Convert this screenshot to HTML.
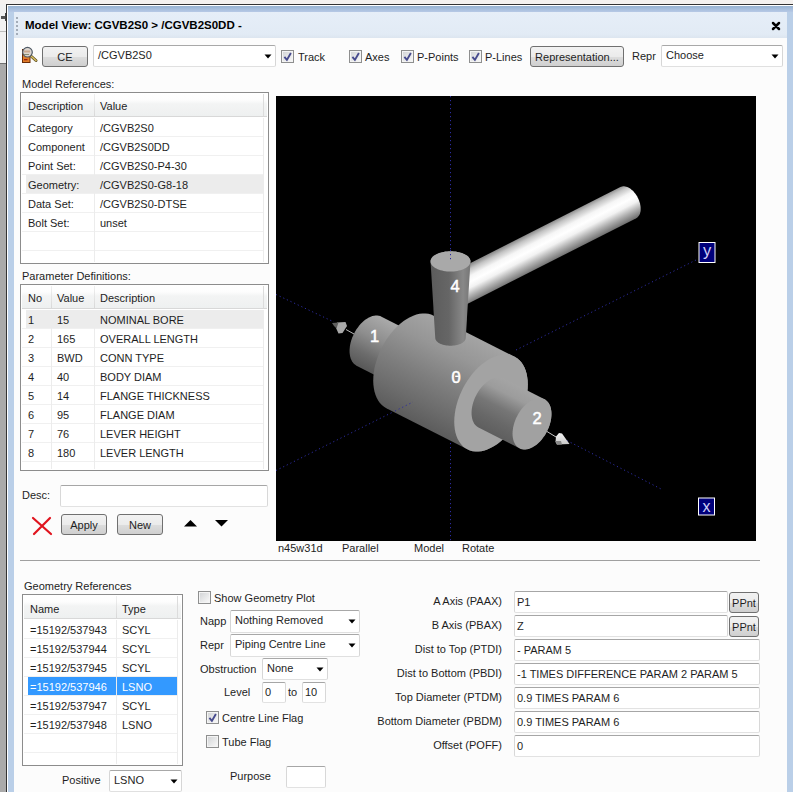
<!DOCTYPE html>
<html><head><meta charset="utf-8"><style>
html,body{margin:0;padding:0}
body{width:793px;height:792px;position:relative;overflow:hidden;background:#f1f1f1;font-family:"Liberation Sans",sans-serif}
.t{position:absolute;font-family:"Liberation Sans",sans-serif;font-size:11px;line-height:13px;white-space:nowrap;color:#1e1e1e}
</style></head><body>
<div style="position:absolute;left:0px;top:0px;width:793px;height:4px;background:#f4f1ef"></div>
<div style="position:absolute;left:0px;top:4px;width:6px;height:60px;background:#f1f1f1"></div>
<div style="position:absolute;left:0px;top:31px;width:6px;height:1px;background:#bdbdbd"></div>
<div style="position:absolute;left:1px;top:16px;width:5px;height:3px;background:#555"></div>
<div style="position:absolute;left:5px;top:13px;width:1px;height:8px;background:#444"></div>
<div style="position:absolute;left:0px;top:63px;width:6px;height:1px;background:#707070"></div>
<div style="position:absolute;left:0px;top:64px;width:6px;height:728px;background:#aaaaaa"></div>
<div style="position:absolute;left:6px;top:4px;width:787px;height:788px;background:#333"></div>
<div style="position:absolute;left:7px;top:5px;width:786px;height:787px;background:#fff"></div>
<div style="position:absolute;left:8px;top:6px;width:785px;height:786px;background:#bacfe8"></div>
<div style="position:absolute;left:8px;top:6px;width:785px;height:6px;background:linear-gradient(#97b3d2,#b7c9e6)"></div>
<div style="position:absolute;left:14px;top:12px;width:773px;height:26px;background:linear-gradient(#e6eef8,#e2ebf5 85%,#dce5ef)"></div>
<div style="position:absolute;left:14px;top:38px;width:773px;height:754px;background:#fcfcfc"></div>
<div style="position:absolute;left:16px;top:17px;width:2px;height:2px;background:#a3acb8"></div>
<div style="position:absolute;left:16px;top:21px;width:2px;height:2px;background:#a3acb8"></div>
<div style="position:absolute;left:16px;top:25px;width:2px;height:2px;background:#a3acb8"></div>
<div style="position:absolute;left:16px;top:29px;width:2px;height:2px;background:#a3acb8"></div>
<div style="position:absolute;left:16px;top:33px;width:2px;height:2px;background:#a3acb8"></div>
<div class="t" style="left:25px;top:19px;font-size:11.5px;color:#000;font-weight:bold;">Model View: CGVB2S0 &gt; /CGVB2S0DD -</div>
<svg width="12" height="12" style="position:absolute;left:770px;top:20px"><path d="M3 3L9 9M9 3L3 9" stroke="#000" stroke-width="2.5" stroke-linecap="round"/></svg>
<svg width="24" height="22" viewBox="0 0 24 22" style="position:absolute;left:18px;top:44px">
<rect x="4.5" y="5.5" width="7.5" height="13" fill="#e07e2a" stroke="#6a2c08" stroke-width="1"/>
<rect x="6" y="15" width="3.5" height="1.3" fill="#9a1a10"/>
<line x1="13.5" y1="12.5" x2="18" y2="16.5" stroke="#5a4a20" stroke-width="3" stroke-linecap="round"/>
<line x1="13.5" y1="12.5" x2="18" y2="16.5" stroke="#d8c060" stroke-width="1.6" stroke-linecap="round"/>
<circle cx="9.5" cy="8.2" r="4.8" fill="#dcd6d0" stroke="#505a66" stroke-width="1.2"/>
<rect x="6" y="6.5" width="6" height="2" fill="#c9a890"/>
<rect x="6" y="10" width="5" height="1" fill="#8a8a70"/>
</svg>
<div style="position:absolute;left:42px;top:46px;width:46px;height:21px;border:1px solid #707070;box-sizing:border-box;border-radius:3px;background:linear-gradient(#f2f2f2 0%,#ebebeb 50%,#dddddd 51%,#cfcfcf 100%)"></div>
<div class="t" style="left:42px;width:46px;text-align:center;top:51px;font-size:11px;color:#1e1e1e">CE</div>
<div style="position:absolute;left:93px;top:45px;width:183px;height:22px;background:#fff;border:1px solid #d6d6d6;box-sizing:border-box;border-radius:2px;border-top-color:#a8a8a8;border-bottom-color:#e0e0e0"></div>
<div class="t" style="left:98px;top:49px;font-size:11px;color:#1e1e1e;">/CGVB2S0</div>
<svg width="8" height="5" viewBox="0 0 8 5" style="position:absolute;left:264px;top:54px"><path d="M0.5 0.5H7.5L4 4.5Z" fill="#000"/></svg>
<div style="position:absolute;left:281px;top:50px;width:13px;height:13px;border:1px solid #8e8f8f;box-sizing:border-box;background:#f4f4f4"></div>
<div style="position:absolute;left:283px;top:52px;width:9px;height:9px;background:linear-gradient(135deg,#d4d6d8,#f7f7f7)"></div>
<svg width="13" height="13" style="position:absolute;left:281px;top:50px"><path d="M3.4 6.9L5.9 9.9L9.9 3" stroke="#474b8e" stroke-width="1.9" fill="none"/></svg>
<div class="t" style="left:298px;top:51px;font-size:11px;color:#1e1e1e;">Track</div>
<div style="position:absolute;left:349px;top:50px;width:13px;height:13px;border:1px solid #8e8f8f;box-sizing:border-box;background:#f4f4f4"></div>
<div style="position:absolute;left:351px;top:52px;width:9px;height:9px;background:linear-gradient(135deg,#d4d6d8,#f7f7f7)"></div>
<svg width="13" height="13" style="position:absolute;left:349px;top:50px"><path d="M3.4 6.9L5.9 9.9L9.9 3" stroke="#474b8e" stroke-width="1.9" fill="none"/></svg>
<div class="t" style="left:365px;top:51px;font-size:11px;color:#1e1e1e;">Axes</div>
<div style="position:absolute;left:401px;top:50px;width:13px;height:13px;border:1px solid #8e8f8f;box-sizing:border-box;background:#f4f4f4"></div>
<div style="position:absolute;left:403px;top:52px;width:9px;height:9px;background:linear-gradient(135deg,#d4d6d8,#f7f7f7)"></div>
<svg width="13" height="13" style="position:absolute;left:401px;top:50px"><path d="M3.4 6.9L5.9 9.9L9.9 3" stroke="#474b8e" stroke-width="1.9" fill="none"/></svg>
<div class="t" style="left:417px;top:51px;font-size:11px;color:#1e1e1e;">P-Points</div>
<div style="position:absolute;left:469px;top:50px;width:13px;height:13px;border:1px solid #8e8f8f;box-sizing:border-box;background:#f4f4f4"></div>
<div style="position:absolute;left:471px;top:52px;width:9px;height:9px;background:linear-gradient(135deg,#d4d6d8,#f7f7f7)"></div>
<svg width="13" height="13" style="position:absolute;left:469px;top:50px"><path d="M3.4 6.9L5.9 9.9L9.9 3" stroke="#474b8e" stroke-width="1.9" fill="none"/></svg>
<div class="t" style="left:485px;top:51px;font-size:11px;color:#1e1e1e;">P-Lines</div>
<div style="position:absolute;left:530px;top:46px;width:94px;height:21px;border:1px solid #707070;box-sizing:border-box;border-radius:3px;background:linear-gradient(#f2f2f2 0%,#ebebeb 50%,#dddddd 51%,#cfcfcf 100%)"></div>
<div class="t" style="left:530px;width:94px;text-align:center;top:51px;font-size:11px;color:#1e1e1e">Representation...</div>
<div class="t" style="left:632px;top:50px;font-size:11px;color:#1e1e1e;">Repr</div>
<div style="position:absolute;left:661px;top:45px;width:122px;height:22px;background:#fff;border:1px solid #d6d6d6;box-sizing:border-box;border-radius:2px;border-top-color:#a8a8a8;border-bottom-color:#e0e0e0"></div>
<div class="t" style="left:666px;top:49px;font-size:11px;color:#1e1e1e;">Choose</div>
<svg width="8" height="5" viewBox="0 0 8 5" style="position:absolute;left:771px;top:54px"><path d="M0.5 0.5H7.5L4 4.5Z" fill="#000"/></svg>
<div class="t" style="left:22px;top:78px;font-size:11px;color:#1e1e1e;">Model References:</div>
<div style="position:absolute;left:20px;top:92px;width:249px;height:172px;border:1px solid #8c8c8c;box-sizing:border-box;background:#fff"></div>
<div style="position:absolute;left:22px;top:93px;width:245px;height:23px;background:linear-gradient(#ffffff 0%,#fdfdfd 30%,#f3f4f4 48%,#eef0f0 100%)"></div>
<div style="position:absolute;left:22px;top:116px;width:245px;height:1px;background:#d8d8d8"></div>
<div style="position:absolute;left:94px;top:94px;width:1px;height:22px;background:linear-gradient(#f0f0f0,#d8d8d8)"></div>
<div style="position:absolute;left:263px;top:94px;width:1px;height:22px;background:#dcdcdc"></div>
<div style="position:absolute;left:22px;top:136px;width:241px;height:1px;background:#f0f0f0"></div>
<div style="position:absolute;left:22px;top:155px;width:241px;height:1px;background:#f0f0f0"></div>
<div style="position:absolute;left:22px;top:174px;width:241px;height:1px;background:#f0f0f0"></div>
<div style="position:absolute;left:26px;top:175px;width:237px;height:18px;background:#ececec"></div>
<div style="position:absolute;left:22px;top:193px;width:241px;height:1px;background:#f0f0f0"></div>
<div style="position:absolute;left:22px;top:212px;width:241px;height:1px;background:#f0f0f0"></div>
<div style="position:absolute;left:22px;top:231px;width:241px;height:1px;background:#f0f0f0"></div>
<div style="position:absolute;left:22px;top:250px;width:241px;height:1px;background:#f0f0f0"></div>
<div style="position:absolute;left:94px;top:118px;width:1px;height:144px;background:#ececec"></div>
<div style="position:absolute;left:263px;top:118px;width:1px;height:144px;background:#ececec"></div>
<div class="t" style="left:28px;top:100px;font-size:11px;color:#1e1e1e;">Description</div>
<div class="t" style="left:100px;top:100px;font-size:11px;color:#1e1e1e;">Value</div>
<div class="t" style="left:28px;top:122px;font-size:11px;color:#1e1e1e;">Category</div>
<div class="t" style="left:100px;top:122px;font-size:11px;color:#1e1e1e;">/CGVB2S0</div>
<div class="t" style="left:28px;top:141px;font-size:11px;color:#1e1e1e;">Component</div>
<div class="t" style="left:100px;top:141px;font-size:11px;color:#1e1e1e;">/CGVB2S0DD</div>
<div class="t" style="left:28px;top:160px;font-size:11px;color:#1e1e1e;">Point Set:</div>
<div class="t" style="left:100px;top:160px;font-size:11px;color:#1e1e1e;">/CGVB2S0-P4-30</div>
<div class="t" style="left:28px;top:179px;font-size:11px;color:#1e1e1e;">Geometry:</div>
<div class="t" style="left:100px;top:179px;font-size:11px;color:#1e1e1e;">/CGVB2S0-G8-18</div>
<div class="t" style="left:28px;top:198px;font-size:11px;color:#1e1e1e;">Data Set:</div>
<div class="t" style="left:100px;top:198px;font-size:11px;color:#1e1e1e;">/CGVB2S0-DTSE</div>
<div class="t" style="left:28px;top:217px;font-size:11px;color:#1e1e1e;">Bolt Set:</div>
<div class="t" style="left:100px;top:217px;font-size:11px;color:#1e1e1e;">unset</div>
<div class="t" style="left:22px;top:270px;font-size:11px;color:#1e1e1e;">Parameter Definitions:</div>
<div style="position:absolute;left:20px;top:284px;width:249px;height:187px;border:1px solid #8c8c8c;box-sizing:border-box;background:#fff"></div>
<div style="position:absolute;left:22px;top:285px;width:245px;height:23px;background:linear-gradient(#ffffff 0%,#fdfdfd 30%,#f3f4f4 48%,#eef0f0 100%)"></div>
<div style="position:absolute;left:22px;top:308px;width:245px;height:1px;background:#d8d8d8"></div>
<div style="position:absolute;left:51px;top:286px;width:1px;height:22px;background:linear-gradient(#f0f0f0,#d8d8d8)"></div>
<div style="position:absolute;left:94px;top:286px;width:1px;height:22px;background:linear-gradient(#f0f0f0,#d8d8d8)"></div>
<div style="position:absolute;left:263px;top:286px;width:1px;height:22px;background:#dcdcdc"></div>
<div style="position:absolute;left:26px;top:310px;width:237px;height:18px;background:#ececec"></div>
<div style="position:absolute;left:22px;top:328px;width:241px;height:1px;background:#f0f0f0"></div>
<div style="position:absolute;left:22px;top:347px;width:241px;height:1px;background:#f0f0f0"></div>
<div style="position:absolute;left:22px;top:366px;width:241px;height:1px;background:#f0f0f0"></div>
<div style="position:absolute;left:22px;top:385px;width:241px;height:1px;background:#f0f0f0"></div>
<div style="position:absolute;left:22px;top:404px;width:241px;height:1px;background:#f0f0f0"></div>
<div style="position:absolute;left:22px;top:423px;width:241px;height:1px;background:#f0f0f0"></div>
<div style="position:absolute;left:22px;top:442px;width:241px;height:1px;background:#f0f0f0"></div>
<div style="position:absolute;left:22px;top:461px;width:241px;height:1px;background:#f0f0f0"></div>
<div style="position:absolute;left:51px;top:310px;width:1px;height:159px;background:#ececec"></div>
<div style="position:absolute;left:94px;top:310px;width:1px;height:159px;background:#ececec"></div>
<div style="position:absolute;left:263px;top:310px;width:1px;height:159px;background:#ececec"></div>
<div class="t" style="left:28px;top:292px;font-size:11px;color:#1e1e1e;">No</div>
<div class="t" style="left:57px;top:292px;font-size:11px;color:#1e1e1e;">Value</div>
<div class="t" style="left:100px;top:292px;font-size:11px;color:#1e1e1e;">Description</div>
<div class="t" style="left:28px;top:314px;font-size:11px;color:#1e1e1e;">1</div>
<div class="t" style="left:57px;top:314px;font-size:11px;color:#1e1e1e;">15</div>
<div class="t" style="left:100px;top:314px;font-size:11px;color:#1e1e1e;">NOMINAL BORE</div>
<div class="t" style="left:28px;top:333px;font-size:11px;color:#1e1e1e;">2</div>
<div class="t" style="left:57px;top:333px;font-size:11px;color:#1e1e1e;">165</div>
<div class="t" style="left:100px;top:333px;font-size:11px;color:#1e1e1e;">OVERALL LENGTH</div>
<div class="t" style="left:28px;top:352px;font-size:11px;color:#1e1e1e;">3</div>
<div class="t" style="left:57px;top:352px;font-size:11px;color:#1e1e1e;">BWD</div>
<div class="t" style="left:100px;top:352px;font-size:11px;color:#1e1e1e;">CONN TYPE</div>
<div class="t" style="left:28px;top:371px;font-size:11px;color:#1e1e1e;">4</div>
<div class="t" style="left:57px;top:371px;font-size:11px;color:#1e1e1e;">40</div>
<div class="t" style="left:100px;top:371px;font-size:11px;color:#1e1e1e;">BODY DIAM</div>
<div class="t" style="left:28px;top:390px;font-size:11px;color:#1e1e1e;">5</div>
<div class="t" style="left:57px;top:390px;font-size:11px;color:#1e1e1e;">14</div>
<div class="t" style="left:100px;top:390px;font-size:11px;color:#1e1e1e;">FLANGE THICKNESS</div>
<div class="t" style="left:28px;top:409px;font-size:11px;color:#1e1e1e;">6</div>
<div class="t" style="left:57px;top:409px;font-size:11px;color:#1e1e1e;">95</div>
<div class="t" style="left:100px;top:409px;font-size:11px;color:#1e1e1e;">FLANGE DIAM</div>
<div class="t" style="left:28px;top:428px;font-size:11px;color:#1e1e1e;">7</div>
<div class="t" style="left:57px;top:428px;font-size:11px;color:#1e1e1e;">76</div>
<div class="t" style="left:100px;top:428px;font-size:11px;color:#1e1e1e;">LEVER HEIGHT</div>
<div class="t" style="left:28px;top:447px;font-size:11px;color:#1e1e1e;">8</div>
<div class="t" style="left:57px;top:447px;font-size:11px;color:#1e1e1e;">180</div>
<div class="t" style="left:100px;top:447px;font-size:11px;color:#1e1e1e;">LEVER LENGTH</div>
<div class="t" style="left:22px;top:489px;font-size:11px;color:#1e1e1e;">Desc:</div>
<div style="position:absolute;left:60px;top:485px;width:208px;height:22px;background:#fff;border:1px solid #d8d8d8;box-sizing:border-box;border-top-color:#a6a6a6;border-bottom-color:#e2e2e2;border-radius:2px"></div>
<svg width="22" height="20" style="position:absolute;left:31px;top:516px"><path d="M2 2L20 18M19 2L3 18" stroke="#e0141e" stroke-width="2.2" stroke-linecap="round"/></svg>
<div style="position:absolute;left:61px;top:514px;width:46px;height:21px;border:1px solid #707070;box-sizing:border-box;border-radius:3px;background:linear-gradient(#f2f2f2 0%,#ebebeb 50%,#dddddd 51%,#cfcfcf 100%)"></div>
<div class="t" style="left:61px;width:46px;text-align:center;top:519px;font-size:11px;color:#1e1e1e">Apply</div>
<div style="position:absolute;left:117px;top:514px;width:46px;height:21px;border:1px solid #707070;box-sizing:border-box;border-radius:3px;background:linear-gradient(#f2f2f2 0%,#ebebeb 50%,#dddddd 51%,#cfcfcf 100%)"></div>
<div class="t" style="left:117px;width:46px;text-align:center;top:519px;font-size:11px;color:#1e1e1e">New</div>
<svg width="14" height="7" style="position:absolute;left:184px;top:520px"><path d="M0 6.5H13L6.5 0Z" fill="#000"/></svg>
<svg width="14" height="7" style="position:absolute;left:215px;top:520px"><path d="M0 0H13L6.5 6.5Z" fill="#000"/></svg>
<div id="vp" style="position:absolute;left:276px;top:96px;width:480px;height:445px;background:#000;overflow:hidden"><svg width="480" height="445" viewBox="276 96 480 445" style="position:absolute;left:0;top:0"><defs><linearGradient id="gh" gradientUnits="userSpaceOnUse" x1="561.0" y1="217.1" x2="577.1" y2="248.2"><stop offset="0" stop-color="#8e8e8e"/><stop offset="0.12" stop-color="#c4c4c4"/><stop offset="0.3" stop-color="#f6f6f6"/><stop offset="0.45" stop-color="#ffffff"/><stop offset="0.6" stop-color="#f2f2f2"/><stop offset="0.8" stop-color="#b0b0b0"/><stop offset="1" stop-color="#727272"/></linearGradient><linearGradient id="gn1" gradientUnits="userSpaceOnUse" x1="403.0" y1="329.2" x2="379.5" y2="375.6"><stop offset="0" stop-color="#a8a8a8"/><stop offset="0.4" stop-color="#8e8e8e"/><stop offset="0.75" stop-color="#6c6c6c"/><stop offset="1" stop-color="#5a5a5a"/></linearGradient><linearGradient id="gb" gradientUnits="userSpaceOnUse" x1="474.0" y1="336.1" x2="427.0" y2="428.9"><stop offset="0" stop-color="#a4a4a4"/><stop offset="0.25" stop-color="#969696"/><stop offset="0.55" stop-color="#7e7e7e"/><stop offset="0.8" stop-color="#6c6c6c"/><stop offset="1" stop-color="#5c5c5c"/></linearGradient><linearGradient id="gs" gradientUnits="userSpaceOnUse" x1="431" y1="0" x2="471" y2="0"><stop offset="0" stop-color="#5c5c5c"/><stop offset="0.45" stop-color="#666666"/><stop offset="0.8" stop-color="#888888"/><stop offset="1" stop-color="#747474"/></linearGradient><linearGradient id="gn2" gradientUnits="userSpaceOnUse" x1="522.2" y1="388.1" x2="497.3" y2="437.1"><stop offset="0" stop-color="#a4a4a4"/><stop offset="0.22" stop-color="#9c9c9c"/><stop offset="0.5" stop-color="#767676"/><stop offset="0.75" stop-color="#686868"/><stop offset="1" stop-color="#5e5e5e"/></linearGradient></defs><path d="M450.5 96 L450.5 262" stroke="#2c2ca0" stroke-width="1" stroke-dasharray="1.2 2.8" fill="none"/><path d="M450.5 443 L450.5 541" stroke="#2c2ca0" stroke-width="1" stroke-dasharray="1.2 2.8" fill="none"/><path d="M276 294.5 L334 322" stroke="#2c2ca0" stroke-width="1" stroke-dasharray="1.2 2.8" fill="none"/><path d="M276 470.5 L395 411" stroke="#2c2ca0" stroke-width="1" stroke-dasharray="1.2 2.8" fill="none"/><path d="M516 350 L698 259" stroke="#2c2ca0" stroke-width="1" stroke-dasharray="1.2 2.8" fill="none"/><path d="M560 437 L663 490" stroke="#2c2ca0" stroke-width="1" stroke-dasharray="1.2 2.8" fill="none"/><path d="M438.13 286.54 L438.17 285.25 L438.31 284.02 L438.55 282.86 L438.87 281.77 L439.29 280.76 L439.78 279.85 L440.36 279.03 L441.02 278.32 L441.75 277.72 L442.55 277.24 L620.36 186.99 L621.21 186.63 L622.12 186.38 L623.08 186.26 L624.08 186.26 L625.11 186.39 L626.16 186.64 L627.23 187.01 L628.31 187.50 L629.39 188.11 L630.46 188.82 L631.51 189.64 L632.54 190.56 L633.54 191.57 L634.50 192.66 L635.41 193.83 L636.26 195.07 L637.06 196.36 L637.79 197.70 L638.45 199.08 L639.03 200.48 L639.52 201.90 L639.94 203.32 L640.26 204.74 L640.50 206.15 L640.64 207.52 L640.68 208.86 L640.64 210.15 L640.50 211.38 L640.26 212.55 L639.94 213.64 L639.52 214.64 L639.03 215.56 L638.45 216.37 L637.79 217.08 L637.06 217.68 L636.26 218.17 L458.45 308.41 L457.60 308.78 L456.69 309.02 L455.73 309.14 L454.73 309.14 L453.70 309.01 L452.65 308.76 L451.58 308.39 L450.50 307.90 L449.42 307.30 L448.35 306.58 L447.30 305.76 L446.27 304.85 L445.27 303.84 L444.31 302.74 L443.40 301.57 L442.55 300.34 L441.75 299.05 L441.02 297.71 L440.36 296.33 L439.78 294.93 L439.29 293.50 L438.87 292.08 L438.55 290.66 L438.31 289.26 L438.17 287.88Z" fill="url(#gh)"/><path d="M349.56 351.01 L349.63 348.90 L349.85 346.74 L350.22 344.54 L350.73 342.31 L351.38 340.07 L352.16 337.84 L353.07 335.63 L354.11 333.47 L355.25 331.36 L356.50 329.33 L357.85 327.39 L359.28 325.55 L360.79 323.83 L362.35 322.25 L363.97 320.81 L365.63 319.52 L367.31 318.39 L369.00 317.44 L370.70 316.67 L372.38 316.09 L374.04 315.70 L375.65 315.50 L377.22 315.49 L378.73 315.68 L380.16 316.07 L381.50 316.64 L422.50 337.45 L423.75 338.21 L424.89 339.15 L425.93 340.27 L426.84 341.55 L427.62 342.99 L428.27 344.57 L428.78 346.28 L429.15 348.11 L429.37 350.05 L429.44 352.07 L429.37 354.18 L429.15 356.34 L428.78 358.54 L428.27 360.77 L427.62 363.01 L426.84 365.25 L425.93 367.45 L424.89 369.62 L423.75 371.72 L422.50 373.75 L421.15 375.69 L419.72 377.53 L418.22 379.25 L416.65 380.83 L415.03 382.28 L413.38 383.56 L411.69 384.69 L410.00 385.64 L408.30 386.41 L406.62 386.99 L404.97 387.39 L403.35 387.59 L401.78 387.59 L400.28 387.40 L398.85 387.01 L397.50 386.44 L356.50 365.63 L355.25 364.87 L354.11 363.93 L353.07 362.81 L352.16 361.53 L351.38 360.10 L350.73 358.52 L350.22 356.80 L349.85 354.97 L349.63 353.04Z" fill="url(#gn1)"/><path d="M373.23 380.61 L373.37 376.63 L373.79 372.54 L374.48 368.37 L375.45 364.16 L376.68 359.92 L378.16 355.70 L379.88 351.53 L381.83 347.44 L384.00 343.46 L386.36 339.62 L388.91 335.95 L391.61 332.47 L394.46 329.22 L397.42 326.22 L400.48 323.50 L403.61 321.06 L406.79 318.94 L410.00 317.14 L413.20 315.68 L416.38 314.58 L419.52 313.84 L422.57 313.46 L425.54 313.45 L428.38 313.81 L431.09 314.54 L433.63 315.63 L514.64 356.74 L517.00 358.18 L519.17 359.96 L521.12 362.07 L522.84 364.49 L524.33 367.21 L525.55 370.19 L526.52 373.43 L527.21 376.90 L527.63 380.56 L527.77 384.39 L527.63 388.37 L527.21 392.46 L526.52 396.63 L525.55 400.84 L524.33 405.08 L522.84 409.30 L521.12 413.47 L519.17 417.56 L517.00 421.54 L514.64 425.38 L512.09 429.05 L509.39 432.53 L506.54 435.78 L503.58 438.78 L500.52 441.50 L497.39 443.94 L494.21 446.06 L491.00 447.86 L487.80 449.32 L484.62 450.42 L481.48 451.16 L478.43 451.54 L475.46 451.55 L472.62 451.19 L469.91 450.46 L467.37 449.37 L386.36 408.26 L384.00 406.82 L381.83 405.04 L379.88 402.93 L378.16 400.51 L376.68 397.79 L375.45 394.81 L374.48 391.57 L373.79 388.10 L373.37 384.44Z" fill="url(#gb)"/><path d="M395 411 L413 402" stroke="#2c2ca0" stroke-width="1" stroke-dasharray="1.2 2.8" fill="none"/><path d="M430.52 261.41 L430.60 260.52 L430.83 259.65 L431.20 258.78 L431.73 257.94 L432.39 257.12 L433.20 256.34 L434.14 255.59 L435.20 254.89 L436.37 254.24 L437.66 253.64 L439.04 253.10 L440.51 252.63 L442.06 252.22 L443.67 251.88 L445.33 251.62 L447.03 251.42 L448.76 251.31 L450.50 251.27 L452.24 251.31 L453.97 251.42 L455.67 251.62 L457.33 251.88 L458.94 252.22 L460.49 252.63 L461.96 253.10 L463.34 253.64 L464.63 254.24 L465.80 254.89 L466.86 255.59 L467.80 256.34 L468.61 257.12 L469.27 257.94 L469.80 258.78 L470.17 259.65 L470.40 260.52 L470.48 261.41 L465.73 337.96 L465.67 338.64 L465.50 339.31 L465.21 339.96 L464.81 340.61 L464.30 341.23 L463.69 341.83 L462.97 342.40 L462.17 342.93 L461.27 343.43 L460.29 343.88 L459.23 344.29 L458.11 344.66 L456.94 344.97 L455.71 345.23 L454.44 345.43 L453.14 345.57 L451.83 345.66 L450.50 345.69 L449.17 345.66 L447.86 345.57 L446.56 345.43 L445.29 345.23 L444.06 344.97 L442.89 344.66 L441.77 344.29 L440.71 343.88 L439.73 343.43 L438.83 342.93 L438.03 342.40 L437.31 341.83 L436.70 341.23 L436.19 340.61 L435.79 339.96 L435.50 339.31 L435.33 338.64 L435.27 337.96Z" fill="url(#gs)"/><path d="M464.63 268.58 L465.80 267.93 L466.86 267.22 L467.80 266.48 L468.61 265.69 L469.27 264.88 L469.80 264.03 L470.17 263.17 L470.40 262.29 L470.48 261.41 L470.40 260.52 L470.17 259.65 L469.80 258.78 L469.27 257.94 L468.61 257.12 L467.80 256.34 L466.86 255.59 L465.80 254.89 L464.63 254.24 L463.34 253.64 L461.96 253.10 L460.49 252.63 L458.94 252.22 L457.33 251.88 L455.67 251.61 L453.97 251.42 L452.24 251.31 L450.50 251.27 L448.76 251.31 L447.03 251.42 L445.33 251.61 L443.67 251.88 L442.06 252.22 L440.51 252.63 L439.04 253.10 L437.66 253.64 L436.37 254.24 L435.20 254.89 L434.14 255.59 L433.20 256.34 L432.39 257.12 L431.73 257.94 L431.20 258.78 L430.83 259.65 L430.60 260.52 L430.52 261.41 L430.60 262.29 L430.83 263.17 L431.20 264.03 L431.73 264.88 L432.39 265.69 L433.20 266.48 L434.14 267.22 L435.20 267.93 L436.37 268.58 L437.66 269.18 L439.04 269.71 L440.51 270.19 L442.06 270.60 L443.67 270.94 L445.33 271.20 L447.03 271.39 L448.76 271.51 L450.50 271.55 L452.24 271.51 L453.97 271.39 L455.67 271.20 L457.33 270.94 L458.94 270.60 L460.49 270.19 L461.96 269.71 L463.34 269.18Z" fill="#a9a9a9"/><path d="M450.5 250 L450.5 262" stroke="#2c2ca0" stroke-width="1" stroke-dasharray="1.2 2.8" fill="none"/><path d="M527.77 384.39 L527.63 380.56 L527.21 376.90 L526.52 373.43 L525.55 370.20 L524.33 367.21 L522.84 364.49 L521.12 362.07 L519.17 359.96 L517.00 358.18 L514.64 356.74 L512.09 355.65 L509.39 354.92 L506.54 354.56 L503.58 354.57 L500.52 354.95 L497.39 355.69 L494.21 356.80 L491.00 358.25 L487.80 360.05 L484.62 362.17 L481.48 364.61 L478.43 367.34 L475.46 370.34 L472.62 373.58 L469.91 377.06 L467.37 380.73 L465.00 384.57 L462.83 388.55 L460.88 392.64 L459.16 396.82 L457.68 401.03 L456.45 405.27 L455.48 409.49 L454.79 413.65 L454.37 417.74 L454.23 421.72 L454.37 425.55 L454.79 429.21 L455.48 432.68 L456.45 435.92 L457.68 438.90 L459.16 441.62 L460.88 444.04 L462.83 446.15 L465.00 447.93 L467.37 449.37 L469.91 450.46 L472.62 451.19 L475.46 451.55 L478.43 451.54 L481.48 451.16 L484.62 450.42 L487.80 449.32 L491.00 447.86 L494.21 446.06 L497.39 443.94 L500.52 441.50 L503.58 438.78 L506.54 435.78 L509.39 432.53 L512.09 429.05 L514.64 425.38 L517.00 421.54 L519.17 417.56 L521.12 413.47 L522.84 409.30 L524.33 405.08 L525.55 400.84 L526.52 396.63 L527.21 392.46 L527.63 388.37Z" fill="#a3a3a3"/><path d="M471.56 412.93 L471.63 410.82 L471.85 408.66 L472.22 406.46 L472.73 404.23 L473.38 401.99 L474.16 399.75 L475.07 397.55 L476.11 395.38 L477.25 393.28 L478.50 391.25 L479.85 389.31 L481.28 387.47 L482.78 385.75 L484.35 384.17 L485.97 382.72 L487.62 381.44 L489.31 380.31 L491.00 379.36 L492.70 378.59 L494.38 378.01 L496.03 377.61 L497.65 377.41 L499.22 377.41 L500.72 377.60 L502.15 377.99 L503.50 378.56 L544.50 399.37 L545.75 400.13 L546.89 401.07 L547.92 402.19 L548.84 403.47 L549.62 404.90 L550.27 406.48 L550.78 408.20 L551.15 410.03 L551.37 411.96 L551.44 413.99 L551.37 416.10 L551.15 418.26 L550.78 420.46 L550.27 422.69 L549.62 424.93 L548.84 427.16 L547.92 429.37 L546.89 431.53 L545.75 433.64 L544.50 435.67 L543.15 437.61 L541.72 439.45 L540.21 441.17 L538.65 442.75 L537.03 444.19 L535.37 445.48 L533.69 446.61 L532.00 447.56 L530.30 448.33 L528.62 448.91 L526.96 449.30 L525.35 449.50 L523.78 449.51 L522.27 449.32 L520.84 448.93 L519.50 448.36 L478.50 427.55 L477.25 426.79 L476.11 425.85 L475.07 424.73 L474.16 423.45 L473.38 422.01 L472.73 420.43 L472.22 418.72 L471.85 416.89 L471.63 414.95Z" fill="url(#gn2)"/><path d="M551.44 413.99 L551.37 411.97 L551.15 410.03 L550.78 408.20 L550.27 406.48 L549.62 404.90 L548.84 403.47 L547.92 402.19 L546.89 401.07 L545.75 400.13 L544.50 399.37 L543.15 398.79 L541.72 398.41 L540.21 398.22 L538.65 398.22 L537.03 398.42 L535.37 398.81 L533.69 399.40 L532.00 400.17 L530.30 401.12 L528.62 402.24 L526.96 403.53 L525.35 404.97 L523.78 406.56 L522.27 408.28 L520.84 410.11 L519.50 412.05 L518.25 414.09 L517.10 416.19 L516.07 418.36 L515.16 420.56 L514.37 422.79 L513.72 425.03 L513.21 427.26 L512.85 429.47 L512.62 431.63 L512.55 433.73 L512.62 435.76 L512.85 437.70 L513.21 439.53 L513.72 441.24 L514.37 442.82 L515.16 444.26 L516.07 445.54 L517.10 446.65 L518.25 447.60 L519.50 448.36 L520.84 448.93 L522.27 449.32 L523.78 449.51 L525.35 449.50 L526.96 449.30 L528.62 448.91 L530.30 448.33 L532.00 447.56 L533.69 446.61 L535.37 445.48 L537.03 444.20 L538.65 442.75 L540.21 441.17 L541.72 439.45 L543.15 437.61 L544.50 435.67 L545.75 433.64 L546.89 431.53 L547.92 429.37 L548.84 427.16 L549.62 424.93 L550.27 422.69 L550.78 420.46 L551.15 418.26 L551.37 416.10Z" fill="#a1a1a1"/><path d="M346 329.5 L354 334" stroke="#bdbdbd" stroke-width="1"/><path d="M547 431.5 L556 437" stroke="#c8c8c8" stroke-width="1"/><path d="M337 322.5 L345.5 322 L347 326 L342.5 333 L338.5 333.5 L336 328 Z" fill="#a8a8a8"/><path d="M332 323 L338.5 322.5 L336.5 328.5 L334 326Z" fill="#5e5e5e"/><defs><linearGradient id="gc2" x1="0" y1="0" x2="0" y2="1"><stop offset="0" stop-color="#f4f4f4"/><stop offset="1" stop-color="#c8c8c8"/></linearGradient></defs><path d="M569.5 444 L562 433.5 L559 433 L556 436.5 L555.5 442 L557 444.5 Z" fill="url(#gc2)"/><path d="M555.5 441 L557 444.8 L562 444.5 L561 441Z" fill="#8a8a8a"/><text x="370" y="341.5" fill="#ffffff" stroke="#ffffff" stroke-width="0.5" font-family="Liberation Sans" font-size="16.5">1</text><text x="450.5" y="291.5" fill="#ffffff" stroke="#ffffff" stroke-width="0.5" font-family="Liberation Sans" font-size="16.5">4</text><text x="451.5" y="383" fill="#ffffff" stroke="#ffffff" stroke-width="0.5" font-family="Liberation Sans" font-size="16.5">0</text><path d="M455.2 376.3 H458.8" stroke="#fff" stroke-width="1.4"/><text x="532.5" y="424" fill="#ffffff" stroke="#ffffff" stroke-width="0.5" font-family="Liberation Sans" font-size="16.5">2</text><rect x="699" y="242.5" width="16" height="20" fill="#00007a" stroke="#fff" stroke-width="1"/><text x="707" y="256" text-anchor="middle" fill="#d0d0f8" font-family="Liberation Sans" font-size="16.5">y</text><rect x="698.5" y="498" width="16" height="17" fill="#00007a" stroke="#fff" stroke-width="1"/><text x="706.5" y="511.5" text-anchor="middle" fill="#d0d0f8" font-family="Liberation Sans" font-size="16">x</text></svg></div>
<div class="t" style="left:278px;top:542px;font-size:11px;color:#1e1e1e;">n45w31d</div>
<div class="t" style="left:342px;top:542px;font-size:11px;color:#1e1e1e;">Parallel</div>
<div class="t" style="left:414px;top:542px;font-size:11px;color:#1e1e1e;">Model</div>
<div class="t" style="left:462px;top:542px;font-size:11px;color:#1e1e1e;">Rotate</div>
<div style="position:absolute;left:20px;top:560px;width:740px;height:1px;background:#a0a0a0"></div>
<div class="t" style="left:24px;top:580px;font-size:11px;color:#1e1e1e;">Geometry References</div>
<div style="position:absolute;left:22px;top:594px;width:161px;height:172px;border:1px solid #8c8c8c;box-sizing:border-box;background:#fff"></div>
<div style="position:absolute;left:24px;top:595px;width:157px;height:23px;background:linear-gradient(#ffffff 0%,#fdfdfd 30%,#f3f4f4 48%,#eef0f0 100%)"></div>
<div style="position:absolute;left:24px;top:618px;width:157px;height:1px;background:#d8d8d8"></div>
<div style="position:absolute;left:116px;top:596px;width:1px;height:22px;background:linear-gradient(#f0f0f0,#d8d8d8)"></div>
<div style="position:absolute;left:177px;top:596px;width:1px;height:22px;background:#dcdcdc"></div>
<div style="position:absolute;left:24px;top:638px;width:153px;height:1px;background:#f0f0f0"></div>
<div style="position:absolute;left:24px;top:657px;width:153px;height:1px;background:#f0f0f0"></div>
<div style="position:absolute;left:24px;top:676px;width:153px;height:1px;background:#f0f0f0"></div>
<div style="position:absolute;left:28px;top:677px;width:149px;height:18px;background:#3399ff"></div>
<div style="position:absolute;left:24px;top:695px;width:153px;height:1px;background:#f0f0f0"></div>
<div style="position:absolute;left:24px;top:714px;width:153px;height:1px;background:#f0f0f0"></div>
<div style="position:absolute;left:24px;top:733px;width:153px;height:1px;background:#f0f0f0"></div>
<div style="position:absolute;left:24px;top:752px;width:153px;height:1px;background:#f0f0f0"></div>
<div style="position:absolute;left:116px;top:620px;width:1px;height:144px;background:#ececec"></div>
<div style="position:absolute;left:177px;top:620px;width:1px;height:144px;background:#ececec"></div>
<div class="t" style="left:30px;top:603px;font-size:11px;color:#1e1e1e;">Name</div>
<div class="t" style="left:122px;top:603px;font-size:11px;color:#1e1e1e;">Type</div>
<div class="t" style="left:30px;top:624px;font-size:11px;color:#1e1e1e;">=15192/537943</div>
<div class="t" style="left:122px;top:624px;font-size:11px;color:#1e1e1e;">SCYL</div>
<div class="t" style="left:30px;top:643px;font-size:11px;color:#1e1e1e;">=15192/537944</div>
<div class="t" style="left:122px;top:643px;font-size:11px;color:#1e1e1e;">SCYL</div>
<div class="t" style="left:30px;top:662px;font-size:11px;color:#1e1e1e;">=15192/537945</div>
<div class="t" style="left:122px;top:662px;font-size:11px;color:#1e1e1e;">SCYL</div>
<div class="t" style="left:30px;top:681px;font-size:11px;color:#fff;">=15192/537946</div>
<div class="t" style="left:122px;top:681px;font-size:11px;color:#fff;">LSNO</div>
<div class="t" style="left:30px;top:700px;font-size:11px;color:#1e1e1e;">=15192/537947</div>
<div class="t" style="left:122px;top:700px;font-size:11px;color:#1e1e1e;">SCYL</div>
<div class="t" style="left:30px;top:719px;font-size:11px;color:#1e1e1e;">=15192/537948</div>
<div class="t" style="left:122px;top:719px;font-size:11px;color:#1e1e1e;">LSNO</div>
<div class="t" style="left:62px;top:774px;font-size:11px;color:#1e1e1e;">Positive</div>
<div style="position:absolute;left:109px;top:770px;width:73px;height:22px;background:#fff;border:1px solid #d6d6d6;box-sizing:border-box;border-radius:2px;border-top-color:#a8a8a8;border-bottom-color:#e0e0e0"></div>
<div class="t" style="left:114px;top:774px;font-size:11px;color:#1e1e1e;">LSNO</div>
<svg width="8" height="5" viewBox="0 0 8 5" style="position:absolute;left:170px;top:779px"><path d="M0.5 0.5H7.5L4 4.5Z" fill="#000"/></svg>
<div style="position:absolute;left:198px;top:591px;width:13px;height:13px;border:1px solid #8e8f8f;box-sizing:border-box;background:#f4f4f4"></div>
<div style="position:absolute;left:200px;top:593px;width:9px;height:9px;background:linear-gradient(135deg,#d4d6d8,#f7f7f7)"></div>
<div class="t" style="left:214px;top:592px;font-size:11px;color:#1e1e1e;">Show Geometry Plot</div>
<div class="t" style="left:200px;top:615px;font-size:11px;color:#1e1e1e;">Napp</div>
<div style="position:absolute;left:230px;top:610px;width:130px;height:23px;background:#fff;border:1px solid #d6d6d6;box-sizing:border-box;border-radius:2px;border-top-color:#a8a8a8;border-bottom-color:#e0e0e0"></div>
<div class="t" style="left:235px;top:614px;font-size:11px;color:#1e1e1e;">Nothing Removed</div>
<svg width="8" height="5" viewBox="0 0 8 5" style="position:absolute;left:348px;top:619px"><path d="M0.5 0.5H7.5L4 4.5Z" fill="#000"/></svg>
<div class="t" style="left:200px;top:639px;font-size:11px;color:#1e1e1e;">Repr</div>
<div style="position:absolute;left:230px;top:634px;width:130px;height:23px;background:#fff;border:1px solid #d6d6d6;box-sizing:border-box;border-radius:2px;border-top-color:#a8a8a8;border-bottom-color:#e0e0e0"></div>
<div class="t" style="left:235px;top:638px;font-size:11px;color:#1e1e1e;">Piping Centre Line</div>
<svg width="8" height="5" viewBox="0 0 8 5" style="position:absolute;left:348px;top:643px"><path d="M0.5 0.5H7.5L4 4.5Z" fill="#000"/></svg>
<div class="t" style="left:200px;top:663px;font-size:11px;color:#1e1e1e;">Obstruction</div>
<div style="position:absolute;left:262px;top:658px;width:66px;height:22px;background:#fff;border:1px solid #d6d6d6;box-sizing:border-box;border-radius:2px;border-top-color:#a8a8a8;border-bottom-color:#e0e0e0"></div>
<div class="t" style="left:267px;top:662px;font-size:11px;color:#1e1e1e;">None</div>
<svg width="8" height="5" viewBox="0 0 8 5" style="position:absolute;left:316px;top:667px"><path d="M0.5 0.5H7.5L4 4.5Z" fill="#000"/></svg>
<div class="t" style="left:224px;top:686px;font-size:11px;color:#1e1e1e;">Level</div>
<div style="position:absolute;left:262px;top:682px;width:24px;height:21px;background:#fff;border:1px solid #d8d8d8;box-sizing:border-box;border-top-color:#a6a6a6;border-bottom-color:#e2e2e2;border-radius:2px"></div>
<div class="t" style="left:265px;top:686px;font-size:11px;color:#1e1e1e;">0</div>
<div class="t" style="left:288px;top:686px;font-size:11px;color:#1e1e1e;">to</div>
<div style="position:absolute;left:302px;top:682px;width:24px;height:21px;background:#fff;border:1px solid #d8d8d8;box-sizing:border-box;border-top-color:#a6a6a6;border-bottom-color:#e2e2e2;border-radius:2px"></div>
<div class="t" style="left:305px;top:686px;font-size:11px;color:#1e1e1e;">10</div>
<div style="position:absolute;left:206px;top:711px;width:13px;height:13px;border:1px solid #8e8f8f;box-sizing:border-box;background:#f4f4f4"></div>
<div style="position:absolute;left:208px;top:713px;width:9px;height:9px;background:linear-gradient(135deg,#d4d6d8,#f7f7f7)"></div>
<svg width="13" height="13" style="position:absolute;left:206px;top:711px"><path d="M3.4 6.9L5.9 9.9L9.9 3" stroke="#474b8e" stroke-width="1.9" fill="none"/></svg>
<div class="t" style="left:222px;top:712px;font-size:11px;color:#1e1e1e;">Centre Line Flag</div>
<div style="position:absolute;left:206px;top:735px;width:13px;height:13px;border:1px solid #8e8f8f;box-sizing:border-box;background:#f4f4f4"></div>
<div style="position:absolute;left:208px;top:737px;width:9px;height:9px;background:linear-gradient(135deg,#d4d6d8,#f7f7f7)"></div>
<div class="t" style="left:222px;top:736px;font-size:11px;color:#1e1e1e;">Tube Flag</div>
<div class="t" style="left:230px;top:770px;font-size:11px;color:#1e1e1e;">Purpose</div>
<div style="position:absolute;left:286px;top:766px;width:40px;height:22px;background:#fff;border:1px solid #d8d8d8;box-sizing:border-box;border-top-color:#a6a6a6;border-bottom-color:#e2e2e2;border-radius:2px"></div>
<div class="t" style="left:300px;width:202px;text-align:right;top:595px">A Axis (PAAX)</div>
<div style="position:absolute;left:514px;top:591px;width:214px;height:22px;background:#fff;border:1px solid #d8d8d8;box-sizing:border-box;border-top-color:#a6a6a6;border-bottom-color:#e2e2e2;border-radius:2px"></div>
<div class="t" style="left:517px;top:596px;font-size:11px;color:#1e1e1e;">P1</div>
<div style="position:absolute;left:729px;top:592px;width:30px;height:21px;border:1px solid #707070;box-sizing:border-box;border-radius:3px;background:linear-gradient(#f2f2f2 0%,#ebebeb 50%,#dddddd 51%,#cfcfcf 100%)"></div>
<div class="t" style="left:729px;width:30px;text-align:center;top:597px;font-size:11px;color:#1e1e1e">PPnt</div>
<div class="t" style="left:300px;width:202px;text-align:right;top:619px">B Axis (PBAX)</div>
<div style="position:absolute;left:514px;top:615px;width:214px;height:22px;background:#fff;border:1px solid #d8d8d8;box-sizing:border-box;border-top-color:#a6a6a6;border-bottom-color:#e2e2e2;border-radius:2px"></div>
<div class="t" style="left:517px;top:620px;font-size:11px;color:#1e1e1e;">Z</div>
<div style="position:absolute;left:729px;top:616px;width:30px;height:21px;border:1px solid #707070;box-sizing:border-box;border-radius:3px;background:linear-gradient(#f2f2f2 0%,#ebebeb 50%,#dddddd 51%,#cfcfcf 100%)"></div>
<div class="t" style="left:729px;width:30px;text-align:center;top:621px;font-size:11px;color:#1e1e1e">PPnt</div>
<div class="t" style="left:300px;width:202px;text-align:right;top:643px">Dist to Top (PTDI)</div>
<div style="position:absolute;left:514px;top:639px;width:246px;height:22px;background:#fff;border:1px solid #d8d8d8;box-sizing:border-box;border-top-color:#a6a6a6;border-bottom-color:#e2e2e2;border-radius:2px"></div>
<div class="t" style="left:517px;top:644px;font-size:11px;color:#1e1e1e;">- PARAM 5</div>
<div class="t" style="left:300px;width:202px;text-align:right;top:667px">Dist to Bottom (PBDI)</div>
<div style="position:absolute;left:514px;top:663px;width:246px;height:22px;background:#fff;border:1px solid #d8d8d8;box-sizing:border-box;border-top-color:#a6a6a6;border-bottom-color:#e2e2e2;border-radius:2px"></div>
<div class="t" style="left:517px;top:668px;font-size:11px;color:#1e1e1e;">-1 TIMES DIFFERENCE PARAM 2 PARAM 5</div>
<div class="t" style="left:300px;width:202px;text-align:right;top:691px">Top Diameter (PTDM)</div>
<div style="position:absolute;left:514px;top:687px;width:246px;height:22px;background:#fff;border:1px solid #d8d8d8;box-sizing:border-box;border-top-color:#a6a6a6;border-bottom-color:#e2e2e2;border-radius:2px"></div>
<div class="t" style="left:517px;top:692px;font-size:11px;color:#1e1e1e;">0.9 TIMES PARAM 6</div>
<div class="t" style="left:300px;width:202px;text-align:right;top:715px">Bottom Diameter (PBDM)</div>
<div style="position:absolute;left:514px;top:711px;width:246px;height:22px;background:#fff;border:1px solid #d8d8d8;box-sizing:border-box;border-top-color:#a6a6a6;border-bottom-color:#e2e2e2;border-radius:2px"></div>
<div class="t" style="left:517px;top:716px;font-size:11px;color:#1e1e1e;">0.9 TIMES PARAM 6</div>
<div class="t" style="left:300px;width:202px;text-align:right;top:739px">Offset (POFF)</div>
<div style="position:absolute;left:514px;top:735px;width:246px;height:22px;background:#fff;border:1px solid #d8d8d8;box-sizing:border-box;border-top-color:#a6a6a6;border-bottom-color:#e2e2e2;border-radius:2px"></div>
<div class="t" style="left:517px;top:740px;font-size:11px;color:#1e1e1e;">0</div>
</body></html>
